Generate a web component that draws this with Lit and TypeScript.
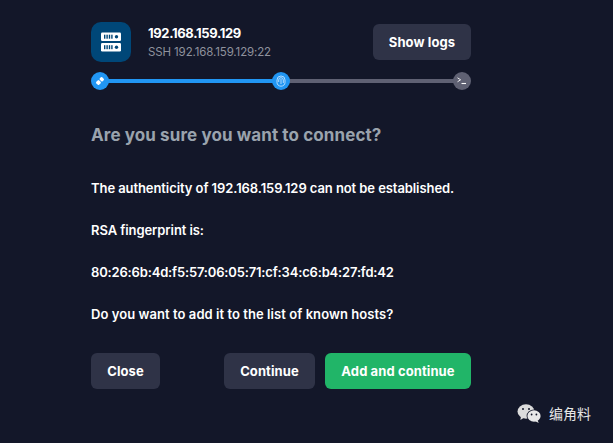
import { LitElement, html, css } from "lit";
import { customElement } from "lit/decorators.js";

@customElement("app-root")
export class AppRoot extends LitElement {
  static styles = css`
    :host {
      display: block;
      position: relative;
      width: 613px;
      height: 443px;
      overflow: hidden;
      background: #131729;
      color: #fff;
      font-family: Inter, "Noto Sans CJK SC", sans-serif;
    }
    .wrap { width: 380px; margin-left: 91px; padding-top: 22px; display: flex; flex-direction: column; }
    .head { display: flex; align-items: center; height: 40px; }
    .tile { width: 40px; height: 40px; border-radius: 10px; background: #004778; display: flex; align-items: center; justify-content: center; }
    .titles { margin-left: 17px; flex: 1; display: flex; flex-direction: column; gap: 4px; }
    .host { font-size: 13px; font-weight: 700; line-height: 16px; letter-spacing: -0.35px; color: #fff; }
    .sub { font-size: 11.5px; font-weight: 400; line-height: 14px; letter-spacing: -0.12px; color: #8f929d; }
    .btn { height: 36px; border-radius: 6px; background: #2f3347; color: #fff; font: 700 13px Inter, sans-serif; letter-spacing: 0.1px; display: flex; align-items: center; justify-content: center; border: 0; padding: 0; }
    .logs { width: 98px; }
    .steps { margin-top: 10px; height: 18px; position: relative; display: flex; align-items: center; justify-content: space-between; }
    .line { position: absolute; left: 9px; right: 9px; top: 7px; height: 4px; background: #5f6173; }
    .line i { display: block; width: 50%; height: 100%; background: #2196f3; }
    .dot { position: relative; width: 18px; height: 18px; border-radius: 50%; background: #2196f3; display: flex; align-items: center; justify-content: center; }
    .dot.off { background: #5f6173; }
    h2 { margin: 33px 0 0; font-size: 17px; line-height: 24px; font-weight: 700; letter-spacing: 0.1px; color: #9aa3ad; }
    .msg { margin: 0; font-size: 13px; font-weight: 600; line-height: 16px; letter-spacing: -0.08px; color: #fff; }
    .msg.tight { letter-spacing: -0.17px; }
    .msg.wide { letter-spacing: 0.06px; }
    .body { margin-top: 33px; display: flex; flex-direction: column; gap: 26px; }
    .actions { margin-top: 31px; display: flex; gap: 10px; }
    .close { width: 69px; margin-right: auto; }
    .cont { width: 91px; }
    .add { width: 146px; background: #21b568; }
    .mark { position: absolute; left: 517px; top: 404px; display: flex; align-items: center; gap: 7px; color: #e6e6e6; font-size: 14px; line-height: 20px; }
  `;

  render() {
    return html`
      <div class="wrap">
        <div class="head">
          <div class="tile">
            <svg width="20" height="20" viewBox="0 0 20 20">
              <rect x="0" y="0.5" width="20" height="8.5" rx="1.2" fill="#fff"/>
              <rect x="0" y="11" width="20" height="8.5" rx="1.2" fill="#fff"/>
              <g fill="#004778">
                <rect x="3" y="2.7" width="1.4" height="4"/><rect x="5.4" y="2.7" width="1.4" height="4"/><rect x="7.8" y="2.7" width="1.4" height="4"/><rect x="10.2" y="2.7" width="1.4" height="4"/>
                <circle cx="15.5" cy="4.75" r="1.7"/>
                <rect x="3" y="13.2" width="1.4" height="4"/><rect x="5.4" y="13.2" width="1.4" height="4"/><rect x="7.8" y="13.2" width="1.4" height="4"/><rect x="10.2" y="13.2" width="1.4" height="4"/>
                <circle cx="15.5" cy="15.25" r="1.7"/>
              </g>
            </svg>
          </div>
          <div class="titles">
            <div class="host">192.168.159.129</div>
            <div class="sub">SSH 192.168.159.129:22</div>
          </div>
          <button class="btn logs">Show logs</button>
        </div>
        <div class="steps">
          <div class="line"><i></i></div>
          <div class="dot">
            <svg width="10" height="10" viewBox="0 0 10 10"><g transform="rotate(45 5 5)" fill="#fff"><rect x="3" y="0.8" width="4" height="3.4" rx="1"/><rect x="3" y="5.2" width="4" height="4" rx="1"/></g></svg>
          </div>
          <div class="dot">
            <svg width="10" height="12" viewBox="0 0 10 12" fill="none" stroke="#d6ecff" stroke-width="0.8"><path d="M1 5a4 4 0 0 1 8 0v2.5c0 2-1.6 3.7-4 3.7S1 9.5 1 7.5z"/><path d="M2.7 7V5a2.3 2.3 0 0 1 4.6 0v3"/><path d="M5 4v5"/></svg>
          </div>
          <div class="dot off">
            <svg width="10" height="8" viewBox="0 0 10 8" fill="none" stroke="#fff"><path d="M0.5 0.8 3.6 2.8 0.5 4.8" stroke-width="0.9"/><path d="M4.5 6.5H9" stroke-width="1.1"/></svg>
          </div>
        </div>
        <h2>Are you sure you want to connect?</h2>
        <div class="body">
          <p class="msg">The authenticity of 192.168.159.129 can not be established.</p>
          <p class="msg">RSA fingerprint is:</p>
          <p class="msg tight">80:26:6b:4d:f5:57:06:05:71:cf:34:c6:b4:27:fd:42</p>
          <p class="msg wide">Do you want to add it to the list of known hosts?</p>
        </div>
        <div class="actions">
          <button class="btn close">Close</button>
          <button class="btn cont">Continue</button>
          <button class="btn add">Add and continue</button>
        </div>
      </div>
      <div class="mark">
        <svg width="25" height="20" viewBox="0 0 25 20">
          <ellipse cx="9" cy="7.5" rx="8.5" ry="7.2" fill="#dcdcdc"/>
          <path d="M4 12l-.6 4 4-2.4z" fill="#dcdcdc"/>
          <circle cx="6" cy="5" r="1" fill="#131729"/><circle cx="12" cy="5" r="1" fill="#131729"/>
          <ellipse cx="17" cy="12" rx="7.4" ry="6.4" fill="#131729"/>
          <ellipse cx="17" cy="12" rx="6.6" ry="5.8" fill="#e8e8e8"/>
          <path d="M20.5 16l1.2 3-3.8-2z" fill="#e8e8e8"/>
          <circle cx="14.6" cy="10.5" r=".9" fill="#131729"/><circle cx="19.4" cy="10.5" r=".9" fill="#131729"/>
        </svg>
        <span>编角料</span>
      </div>
    `;
  }
}
